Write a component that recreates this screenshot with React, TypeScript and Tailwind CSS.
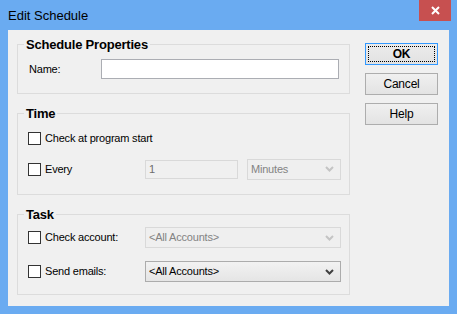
import React from "react";

const ui = { fontFamily: '"Liberation Sans", Arial, sans-serif' };

function Chevron({ disabled }: { disabled?: boolean }) {
  return (
    <svg width="9" height="6" viewBox="0 0 9 6" className="shrink-0">
      <path
        d="M1 1 L4.5 4.5 L8 1"
        fill="none"
        stroke={disabled ? "#c4c4c4" : "#404040"}
        strokeWidth="2"
      />
    </svg>
  );
}

function Checkbox() {
  return <span className="w-[13px] h-[13px] shrink-0 bg-white border border-[#333333]" />;
}

function Select({ value, disabled }: { value: string; disabled?: boolean }) {
  return (
    <div
      className={
        disabled
          ? "h-[21px] flex items-center justify-between pl-[3px] pr-[6px] border border-[#d9d9d9] bg-[#efefef] text-[#838383]"
          : "h-[21px] flex items-center justify-between pl-[3px] pr-[6px] border border-[#acacac] bg-gradient-to-b from-[#f2f2f2] to-[#e5e5e5] text-black"
      }
    >
      <span>{value}</span>
      <Chevron disabled={disabled} />
    </div>
  );
}

// group box: fieldset without padding so the legend sits 7px in from the border
function Group({ title, children, className }: { title: string; children: React.ReactNode; className?: string }) {
  return (
    <fieldset className="border border-[#dcdcdc]">
      <legend className="ml-[6px] px-[2px] text-[13px] leading-[15px] font-bold text-black">{title}</legend>
      <div className={className}>{children}</div>
    </fieldset>
  );
}

function Button({ label, focused }: { label: string; focused?: boolean }) {
  return (
    <button
      className={
        focused
          ? "relative w-[73px] h-[22px] border border-[#3399ff] bg-gradient-to-b from-[#ececec] to-[#e2e2e2] text-[12px] font-bold"
          : "w-[73px] h-[22px] border border-[#adadad] bg-gradient-to-b from-[#f0f0f0] to-[#e3e3e3] text-[12px]"
      }
    >
      {focused && <span className="absolute inset-[2px] border border-dotted border-black" />}
      {label}
    </button>
  );
}

export default function App() {
  return (
    <div className="w-[457px] h-[314px] bg-[#6aabf1] flex flex-col select-none" style={ui}>
      <div className="h-[30px] flex justify-between items-start shrink-0">
        <div className="pl-[8px] pt-[8px] text-[13px] leading-[15px] text-black">Edit Schedule</div>
        <div className="w-[32px] h-[21px] mr-[6px] bg-[#c75050] flex items-center justify-center">
          <svg width="9" height="9" viewBox="0 0 9 9">
            <path d="M1 1 L8 8 M8 1 L1 8" stroke="white" strokeWidth="2" />
          </svg>
        </div>
      </div>

      <div className="mx-[8px] h-[276px] bg-[#f0f0f0] flex text-[11px] tracking-[-0.2px] text-black">
        <div className="w-[333px] ml-[9px] pt-[7px] flex flex-col gap-[12px]">
          <Group title="Schedule Properties" className="pl-[11px] pr-[10px] pt-[7px] pb-[14px]">
            <div className="flex items-center h-[20px]">
              <span className="w-[72px]">Name:</span>
              <div className="flex-1 h-[20px] bg-white border border-[#abadb3]" />
            </div>
          </Group>

          <Group title="Time" className="pl-[10px] pr-[8px] pt-[7px] pb-[15px]">
            <div className="flex flex-col gap-[10px]">
              <div className="flex items-center h-[21px] gap-[4px]">
                <Checkbox />
                <span>Check at program start</span>
              </div>
              <div className="flex items-center h-[20px]">
                <div className="w-[117px] flex items-center gap-[4px]">
                  <Checkbox />
                  <span>Every</span>
                </div>
                <div className="w-[93px] h-[19px] flex items-center pl-[3px] border border-[#d9d9d9] bg-[#f0f0f0] text-[#6d6d6d]">
                  1
                </div>
                <div className="ml-[9px] flex-1">
                  <Select value="Minutes" disabled />
                </div>
              </div>
            </div>
          </Group>

          <Group title="Task" className="pl-[10px] pr-[8px] pt-[5px] pb-[12px]">
            <div className="flex flex-col gap-[13px]">
              <div className="flex items-center">
                <div className="w-[117px] flex items-center gap-[4px]">
                  <Checkbox />
                  <span>Check account:</span>
                </div>
                <div className="flex-1">
                  <Select value="<All Accounts>" disabled />
                </div>
              </div>
              <div className="flex items-center">
                <div className="w-[117px] flex items-center gap-[4px]">
                  <Checkbox />
                  <span>Send emails:</span>
                </div>
                <div className="flex-1">
                  <Select value="<All Accounts>" />
                </div>
              </div>
            </div>
          </Group>
        </div>

        <div className="ml-[15px] pt-[13px] flex flex-col gap-[8px]">
          <Button label="OK" focused />
          <Button label="Cancel" />
          <Button label="Help" />
        </div>
      </div>
    </div>
  );
}
